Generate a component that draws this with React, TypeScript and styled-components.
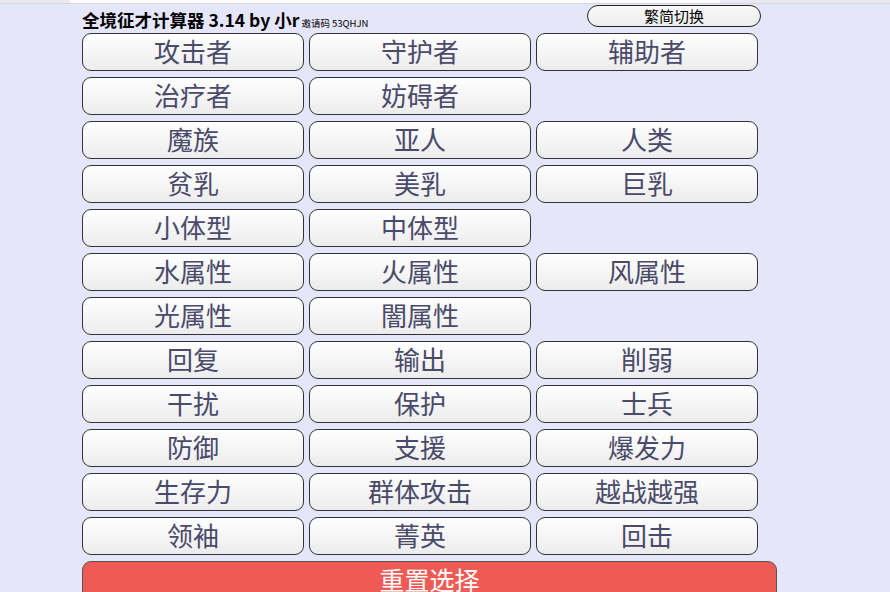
import React, { useState } from "react";
import styled, { createGlobalStyle } from "styled-components";

const GlobalStyle = createGlobalStyle`
  html, body {
    margin: 0;
    padding: 0;
    background: #e6e6fa;
    font-family: "Noto Sans CJK SC", "Noto Sans", sans-serif;
    overflow: hidden;
  }
`;

const ScrollStrip = styled.div`
  height: 3px;
  background: #e9e9ef;
  border-bottom: 1px solid #d6d6dc;
  display: flex;
`;

const ScrollThumb = styled.div`
  margin-left: 70px;
  width: 650px;
  background: #fbfbfb;
`;

const Page = styled.div`
  padding: 1px 0 0 82px;
`;

const Header = styled.div`
  display: flex;
  align-items: flex-end;
  justify-content: space-between;
  width: 679px;
  height: 28px;
`;

const Title = styled.h1`
  margin: 0;
  font-size: 17.5px;
  font-weight: bold;
  color: #000;
  line-height: 20px;
`;

const Invite = styled.span`
  font-size: 9.5px;
  font-weight: normal;
  margin-left: 2px;
`;

const ToggleButton = styled.button`
  align-self: flex-start;
  width: 174px;
  height: 22px;
  border: 1px solid #222;
  border-radius: 11px;
  background: linear-gradient(#fafafa, #ececec);
  font-family: inherit;
  font-size: 15px;
  line-height: 18px;
  color: #000;
  padding: 0;
`;

const Grid = styled.div`
  display: grid;
  grid-template-columns: repeat(3, 222px);
  grid-auto-rows: 38px;
  column-gap: 5px;
  row-gap: 6px;
`;

const Tag = styled.button<{ $active?: boolean }>`
  border: 1px solid #333;
  border-radius: 9px;
  background: ${(p) =>
    p.$active ? "linear-gradient(#dfe8ff, #c8d6f5)" : "linear-gradient(#ffffff, #ececec)"};
  font-family: inherit;
  font-size: 26px;
  line-height: 32px;
  color: #4a4a6a;
  padding: 0 0 3px;
  cursor: pointer;
`;

const Empty = styled.div``;

const ResetButton = styled.button`
  margin-top: 6px;
  width: 695px;
  height: 42px;
  border: 1px solid #555;
  border-radius: 9px;
  background: #ee5b56;
  color: #fff;
  font-family: inherit;
  font-size: 25px;
  line-height: 30px;
  padding: 0 0 6px;
`;

const rows: string[][] = [
  ["攻击者", "守护者", "辅助者"],
  ["治疗者", "妨碍者"],
  ["魔族", "亚人", "人类"],
  ["贫乳", "美乳", "巨乳"],
  ["小体型", "中体型"],
  ["水属性", "火属性", "风属性"],
  ["光属性", "闇属性"],
  ["回复", "输出", "削弱"],
  ["干扰", "保护", "士兵"],
  ["防御", "支援", "爆发力"],
  ["生存力", "群体攻击", "越战越强"],
  ["领袖", "菁英", "回击"],
];

const App: React.FC = () => {
  const [selected, setSelected] = useState<string[]>([]);

  const toggle = (tag: string) =>
    setSelected((s) => (s.includes(tag) ? s.filter((t) => t !== tag) : [...s, tag]));

  return (
    <>
      <GlobalStyle />
      <ScrollStrip>
        <ScrollThumb />
      </ScrollStrip>
      <Page>
        <Header>
          <Title>
            全境征才计算器 3.14 by 小r<Invite>邀请码 53QHJN</Invite>
          </Title>
          <ToggleButton>繁简切换</ToggleButton>
        </Header>
        <Grid>
          {rows.map((row, i) =>
            [0, 1, 2].map((j) =>
              row[j] ? (
                <Tag
                  key={`${i}-${j}`}
                  $active={selected.includes(row[j])}
                  onClick={() => toggle(row[j])}
                >
                  {row[j]}
                </Tag>
              ) : (
                <Empty key={`${i}-${j}`} />
              )
            )
          )}
        </Grid>
        <ResetButton onClick={() => setSelected([])}>重置选择</ResetButton>
      </Page>
    </>
  );
};

export default App;
